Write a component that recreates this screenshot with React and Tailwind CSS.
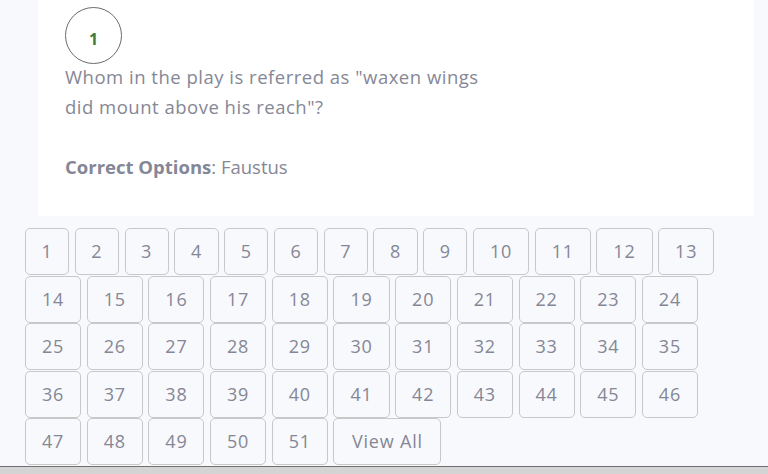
import React from "react";

const nums = Array.from({ length: 51 }, (_, i) => i + 1);

const App = () => {
  // общий стиль кнопок-номеров
  const btn =
    "h-[47px] flex items-center justify-center border border-[#c8c8c8] rounded-[5px] text-[18px] tracking-[0.8px] text-[#858796] bg-transparent";

  return (
    <div
      className="min-h-[474px] bg-[#f8f9fc] flex flex-col"
      style={{ fontFamily: "'Open Sans', Lato, sans-serif" }}
    >
      <div className="ml-[38px] w-[716px] h-[216px] bg-white pl-[27px] pt-[7px]">
        <div className="w-[57px] h-[57px] rounded-full border border-[#6b6b6b] flex items-center justify-center pt-[6px]">
          <span className="text-[16px] font-bold text-[#3d7a3a]">1</span>
        </div>
        <p className="-mt-[2px] text-[18.5px] tracking-[0.5px] leading-[30px] text-[#858796]">
          Whom in the play is referred as "waxen wings
          <br />
          did mount above his reach"?
        </p>
        <p className="mt-[30px] text-[18.5px] leading-[30px] text-[#858796]">
          <span className="font-bold">Correct Options</span>: Faustus
        </p>
      </div>

      <div className="pl-[25px] pt-[12px] w-[730px] flex flex-wrap gap-x-[5.6px] gap-y-[0.5px]">
        {nums.map((n) => (
          <button key={n} className={`${btn} ${n < 10 ? "w-[44.2px]" : "w-[56.1px]"}`}>
            {n}
          </button>
        ))}
        <button className={`${btn} w-[108px]`}>View All</button>
      </div>

      <div className="mt-auto h-[8px] border-t border-[#707070] bg-[#d4d4d4]"></div>
    </div>
  );
};

export default App;
